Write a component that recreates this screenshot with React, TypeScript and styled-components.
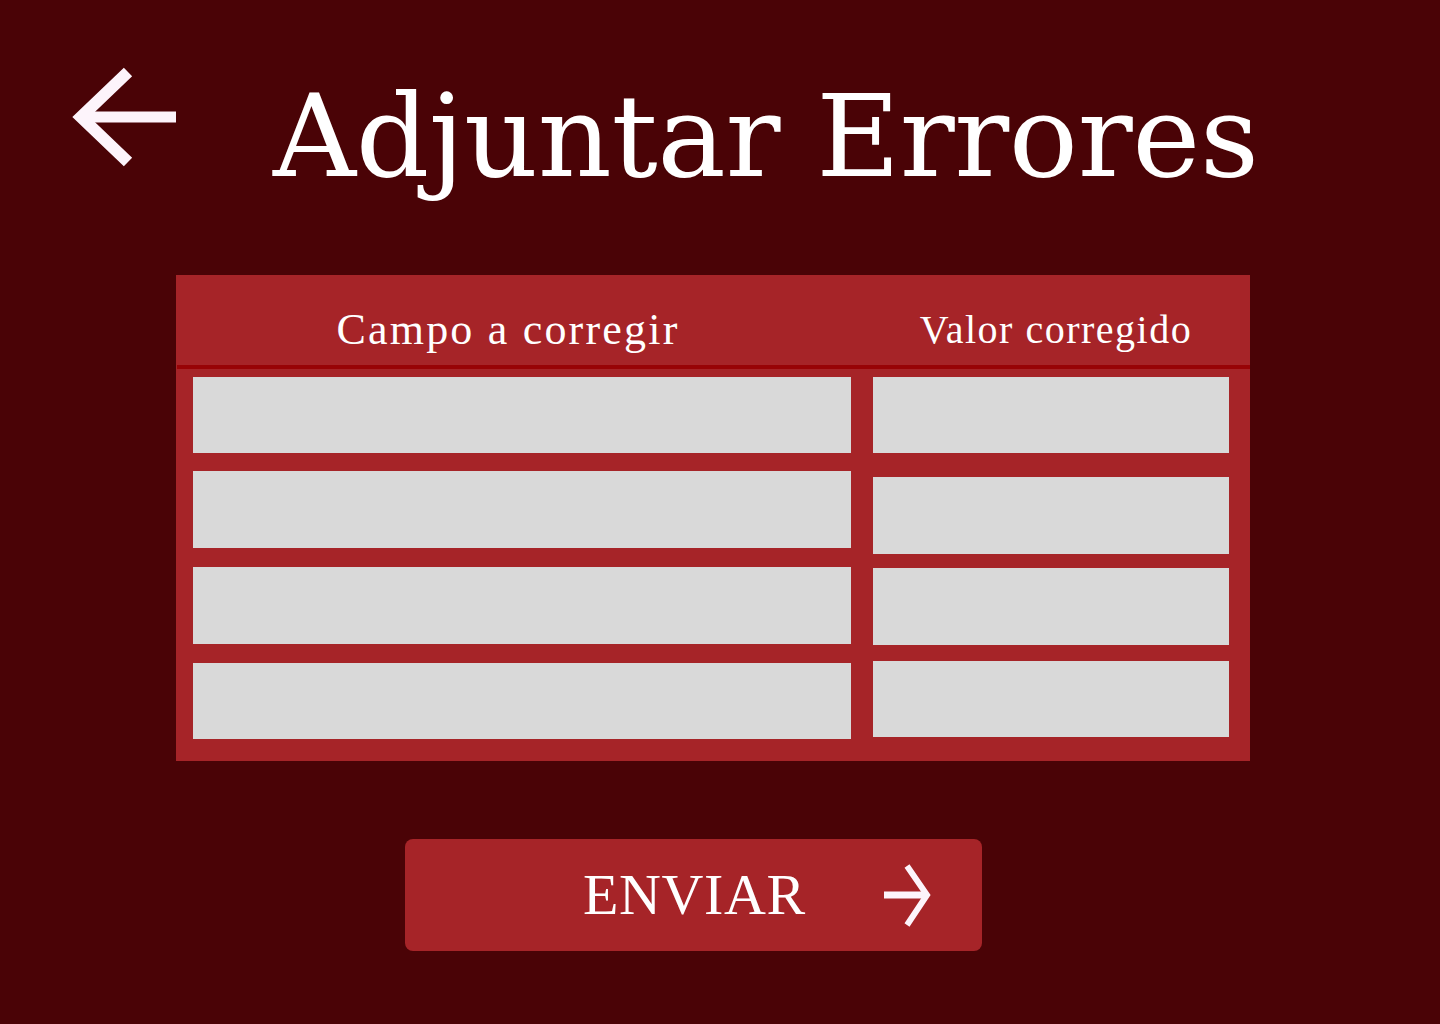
import styled, { createGlobalStyle } from "styled-components";

const GlobalStyle = createGlobalStyle`
    html, body {
        margin: 0;
        padding: 0;
        background-color: #4a0306;
    }
    * {
        box-sizing: border-box;
    }
`

const leftRows = [
    {h: 76, mt: 0},
    {h: 77, mt: 18},
    {h: 77, mt: 19},
    {h: 76, mt: 19},
]

const rightRows = [
    {h: 76, mt: 0},
    {h: 77, mt: 24},
    {h: 77, mt: 14},
    {h: 76, mt: 16},
]

const BackArrow = () => (
    <BackIcon viewBox="70 66 112 104" aria-label="Volver">
        <path d="M128 72 L81 117 L128 162" fill="none" stroke="#fdf4fb" strokeWidth="12" strokeLinejoin="miter"/>
        <path d="M86 117 H176" fill="none" stroke="#fdf4fb" strokeWidth="11"/>
    </BackIcon>
)

const NextArrow = () => (
    <NextIcon viewBox="0 0 50 64">
        <path d="M26 3 L46 32 L26 62" fill="none" stroke="#fdf4fb" strokeWidth="6"/>
        <path d="M3 32 H44" fill="none" stroke="#fdf4fb" strokeWidth="7"/>
    </NextIcon>
)

export default function App() {
    return (
        <Page>
            <GlobalStyle/>
            <Header>
                <BackArrow/>
                <Title>Adjuntar Errores</Title>
            </Header>

            <Panel>
                <PanelHead>
                    <HeadCell $size={44} $pl={0} $pr={28} $mt={0}>Campo a corregir</HeadCell>
                    <HeadCell $size={40} $pl={10} $pr={0} $mt={2}>Valor corregido</HeadCell>
                </PanelHead>
                <Divider/>
                <PanelBody>
                    <Column>
                        {leftRows.map((r, i) => (
                            <Field key={i} $h={r.h} $mt={r.mt}/>
                        ))}
                    </Column>
                    <Column>
                        {rightRows.map((r, i) => (
                            <Field key={i} $h={r.h} $mt={r.mt}/>
                        ))}
                    </Column>
                </PanelBody>
            </Panel>

            <SendButton type="button">
                <SendLabel>ENVIAR</SendLabel>
                <NextArrow/>
            </SendButton>
        </Page>
    );
}

const Page = styled.div`
    min-height: 1024px;
    padding-top: 66px;
    background-color: #4a0306;
`

const Header = styled.header`
    display: flex;
    align-items: flex-start;
    height: 209px;
    padding-left: 70px;
`

const BackIcon = styled.svg`
    width: 112px;
    height: 104px;
    flex-shrink: 0;
`

const Title = styled.h1`
    margin: 13px 0 0 91px;
    font-family: "DejaVu Serif", "Liberation Serif", serif;
    font-weight: 400;
    font-size: 115px;
    line-height: 1;
    letter-spacing: -0.4px;
    color: #ffffff;
    white-space: nowrap;
`

const Panel = styled.section`
    margin-left: 176px;
    width: 1074px;
    background-color: #a62428;
`

const PanelHead = styled.div`
    display: grid;
    grid-template-columns: 658px 356px;
    column-gap: 22px;
    height: 90px;
    padding: 33px 21px 0 17px;
`

const HeadCell = styled.div<{ $size: number; $pl: number; $pr: number; $mt: number }>`
    font-family: "Liberation Serif", serif;
    font-size: ${p => p.$size}px;
    line-height: 1;
    letter-spacing: ${p => (p.$size > 42 ? 2.2 : 1.5)}px;
    color: #ffffff;
    text-align: center;
    padding-left: ${p => p.$pl}px;
    padding-right: ${p => p.$pr}px;
    margin-top: ${p => p.$mt}px;
    white-space: nowrap;
`

const Divider = styled.div`
    height: 4px;
    margin-left: 1px;
    background-color: #980306;
`

const PanelBody = styled.div`
    display: flex;
    gap: 22px;
    padding: 8px 21px 22px 17px;
`

const Column = styled.div`
    display: flex;
    flex-direction: column;
    flex: 0 0 auto;

    &:first-child {
        width: 658px;
    }

    &:last-child {
        width: 356px;
    }
`

const Field = styled.div<{ $h: number; $mt: number }>`
    height: ${p => p.$h}px;
    margin-top: ${p => p.$mt}px;
    background-color: #d9d9d9;
`

const SendButton = styled.button`
    display: flex;
    align-items: center;
    margin: 78px 0 0 405px;
    width: 577px;
    height: 112px;
    padding: 0 0 0 178px;
    border: none;
    border-radius: 8px;
    background-color: #a62428;
    cursor: pointer;
`

const SendLabel = styled.span`
    font-family: "Liberation Serif", serif;
    font-size: 58px;
    line-height: 1;
    letter-spacing: 0.6px;
    color: #ffffff;
`

const NextIcon = styled.svg`
    width: 50px;
    height: 64px;
    margin-left: 75px;
    flex-shrink: 0;
`
